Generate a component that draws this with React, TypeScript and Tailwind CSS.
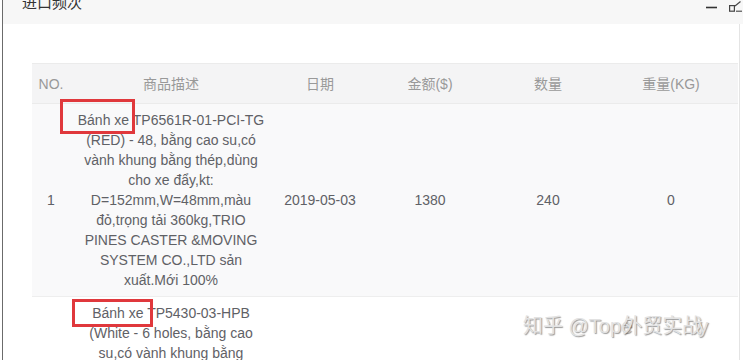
import React from "react";

const desc1 = [
  "Bánh xe TP6561R-01-PCI-TG",
  "(RED) - 48, bằng cao su,có",
  "vành khung bằng thép,dùng",
  "cho xe đẩy,kt:",
  "D=152mm,W=48mm,màu",
  "đỏ,trọng tải 360kg,TRIO",
  "PINES CASTER &MOVING",
  "SYSTEM CO.,LTD sản",
  "xuất.Mới 100%",
];

const desc2 = [
  "Bánh xe TP5430-03-HPB",
  "(White - 6 holes, bằng cao",
  "su,có vành khung bằng",
  "thép,dùng cho xe đẩy,kt:",
  "D=127mm,W=38mm,màu",
  "trắng,TRIO PINES CASTER",
  "&MOVING SYSTEM CO.,LTD",
  "sản xuất.Mới 100%",
];

const cols = "grid grid-cols-[38px_202px_96px_124px_112px_134px]";

function Row({
  no,
  lines,
  date,
  amount,
  qty,
  weight,
  bg,
}: {
  no: string;
  lines: string[];
  date: string;
  amount: string;
  qty: string;
  weight: string;
  bg: string;
}) {
  return (
    <div className={`${cols} ${bg} border-b border-[#eeeeee] text-[#5f6166]`}>
      <div className="flex items-center justify-center">{no}</div>
      <div className="flex flex-col items-center py-[6px] text-center">
        {lines.map((l, i) => (
          <div key={i} className="whitespace-nowrap">
            {l}
          </div>
        ))}
      </div>
      <div className="flex items-center justify-center">{date}</div>
      <div className="flex items-center justify-center">{amount}</div>
      <div className="flex items-center justify-center">{qty}</div>
      <div className="flex items-center justify-center">{weight}</div>
    </div>
  );
}

export default function App() {
  return (
    <div
      className="relative flex h-[360px] w-[743px] overflow-hidden bg-white pl-[2px] text-[14px] leading-[20px]"
      style={{ fontFamily: '"Liberation Sans", Arial, "Noto Sans CJK SC", sans-serif' }}
    >
      <div className="flex flex-1 flex-col border-l border-[#6b6b6b]">
        {/* title bar */}
        <div className="flex h-[24px] shrink-0 items-start justify-between overflow-hidden bg-[#f7f7f7] pl-[19px] pr-[1px]">
          <div className="-mt-[7px] text-[15px] leading-[20px] text-[#333]">进口频次</div>
          <div className="flex items-start gap-[11px] pt-[1px]">
            <svg width="12" height="12" viewBox="0 0 12 12">
              <line x1="0" y1="6.5" x2="11" y2="6.5" stroke="#333" strokeWidth="1.6" />
            </svg>
            <svg width="13" height="11" viewBox="0 0 13 11">
              <rect x="0.6" y="4.6" width="4.8" height="5.6" fill="none" stroke="#444" strokeWidth="1.2" />
              <line x1="6" y1="5" x2="11.5" y2="0.5" stroke="#444" strokeWidth="1.1" />
              <line x1="7" y1="10.2" x2="13" y2="10.2" stroke="#444" strokeWidth="1.1" />
            </svg>
          </div>
        </div>
        {/* content */}
        <div className="mr-[3px] flex-1 border-r border-[#e4e4e4] pl-[29px] pr-[1px] pt-[39px]">
          <div className={`${cols} h-[41px] items-center border-y border-[#ebebeb] bg-[#f4f4f5] text-[#999999]`}>
            <div className="text-center">NO.</div>
            <div className="text-center">商品描述</div>
            <div className="text-center">日期</div>
            <div className="text-center">金额($)</div>
            <div className="text-center">数量</div>
            <div className="text-center">重量(KG)</div>
          </div>
          <Row no="1" lines={desc1} date="2019-05-03" amount="1380" qty="240" weight="0" bg="bg-[#f9f9fa]" />
          <Row no="2" lines={desc2} date="2019-05-03" amount="960" qty="160" weight="0" bg="bg-white" />
        </div>
      </div>

      {/* annotation boxes */}
      <div className="absolute left-[60px] top-[99px] h-[35px] w-[75px] border-[3px] border-[#e0383c]" />
      <div className="absolute left-[72px] top-[299px] h-[28px] w-[81px] border-[3px] border-[#e0383c]" />

      {/* watermark */}
      <div
        className="absolute left-[523px] top-[314px] flex items-center whitespace-nowrap text-[20px] leading-[24px] text-[#e2e2e2] [text-shadow:1px_1px_1px_rgba(50,50,50,0.5)]"
        style={{ fontFamily: '"Liberation Sans", "Noto Sans CJK SC", sans-serif' }}
      >
        <span>知乎 @Tope</span>
        <span className="-ml-[10px]">外贸实战</span>
        <span className="-ml-[4px]">y</span>
      </div>
    </div>
  );
}
